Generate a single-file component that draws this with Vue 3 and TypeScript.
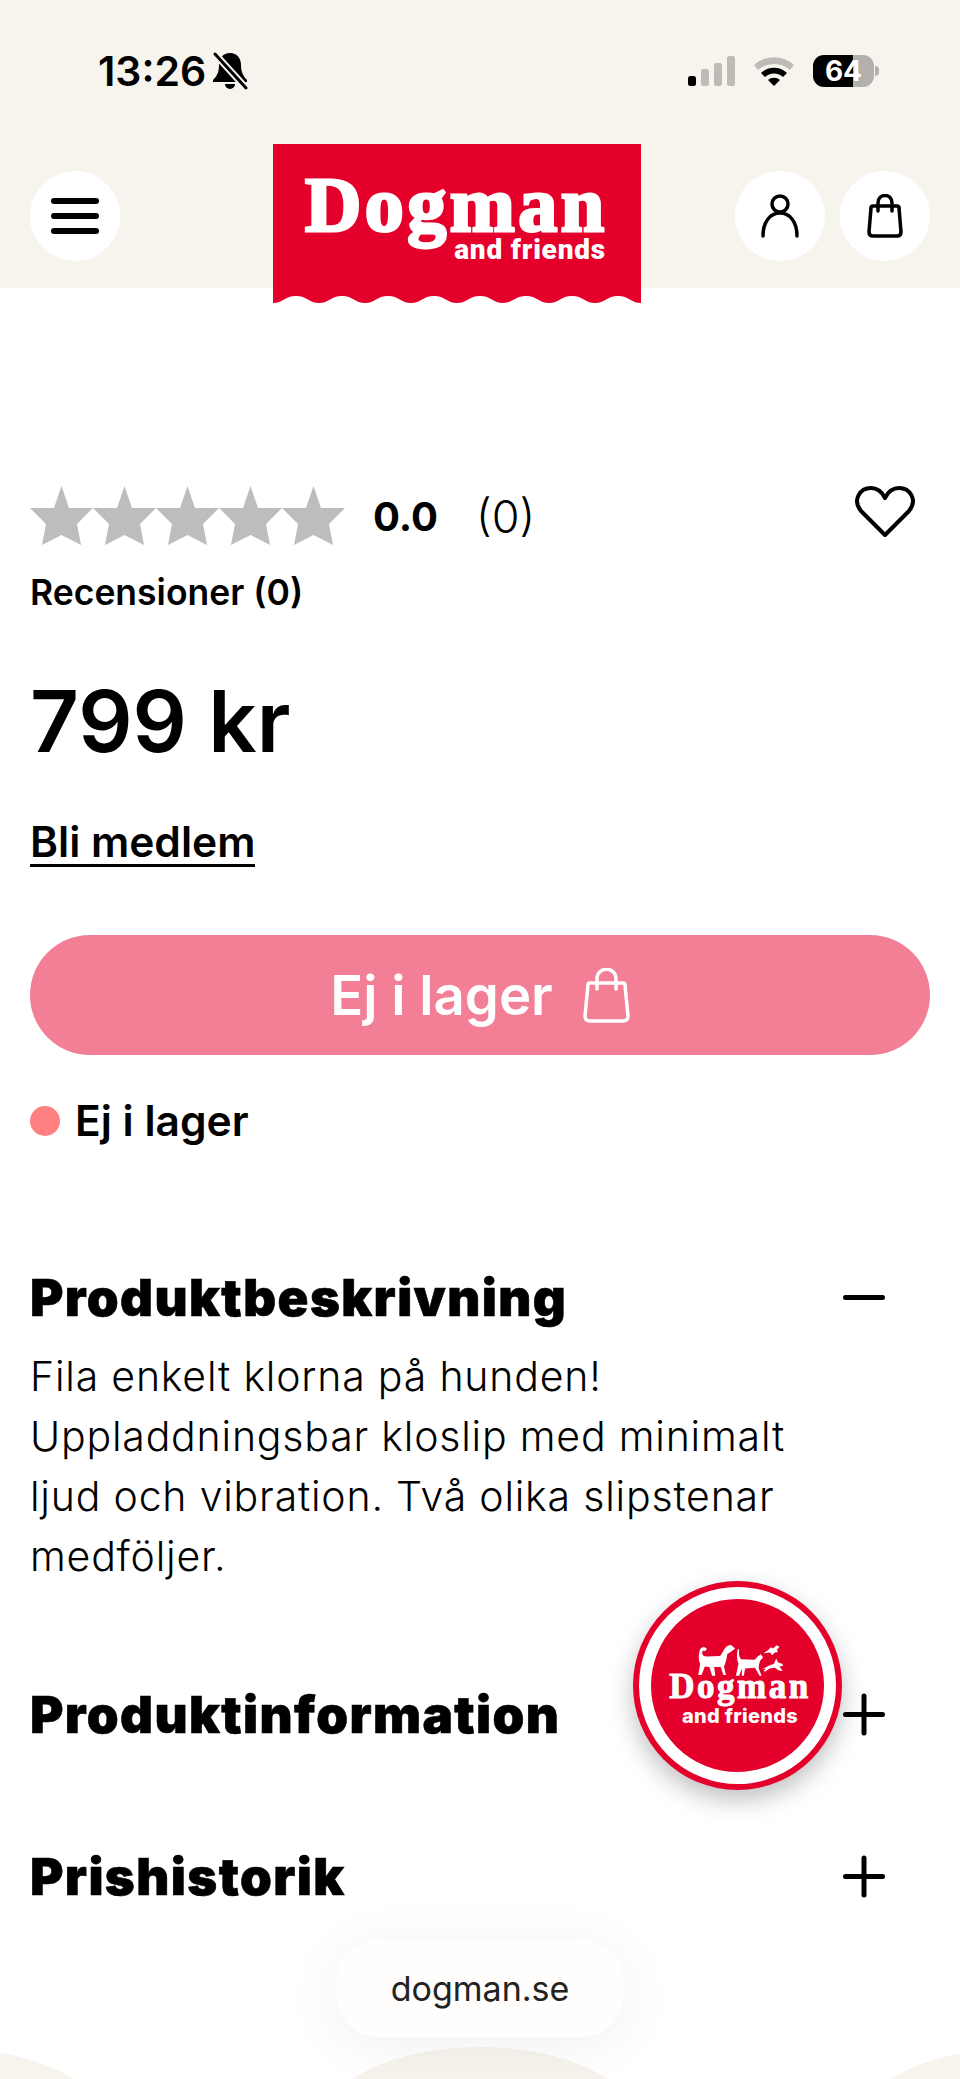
<script setup lang="ts">
const stars = [1, 2, 3, 4, 5];
const description = 'Fila enkelt klorna på hunden! Uppladdningsbar kloslip med minimalt ljud och vibration. Två olika slipstenar medföljer.';
const sections = ['Produktinformation', 'Prishistorik'];

// scalloped bottom edge of the logo, eight humps
let wavePath = 'M0 8';
for (let i = 0; i < 8; i++) {
  const x = i * 46;
  wavePath += ` C${x + 10} 8 ${x + 12} 1 ${x + 23} 1 C${x + 34} 1 ${x + 36} 8 ${x + 46} 8`;
}
wavePath += ' Z';
</script>

<template>
  <div class="page">
    <header class="top">
      <div class="status">
        <div class="time">
          <span>13:26</span>
          <svg width="36" height="38" viewBox="0 0 36 38">
            <path d="M18 1c-7 0-11 5-11 12 0 7-2 11-6 15v2h34v-2c-4-4-6-8-6-15 0-7-4-12-11-12z" fill="#000" />
            <path d="M13 32h10a5 5 0 0 1-10 0z" fill="#000" />
            <path d="M3 2l31 34" stroke="#f7f4ee" stroke-width="7" />
            <path d="M3 2l31 34" stroke="#000" stroke-width="3" stroke-linecap="round" />
          </svg>
        </div>
        <div class="indicators">
          <svg width="47" height="30" viewBox="0 0 47 30">
            <rect x="0" y="20" width="8" height="10" rx="2.5" fill="#000" />
            <rect x="13" y="13" width="8" height="17" rx="2.5" fill="#bdbbb6" />
            <rect x="26" y="7" width="8" height="23" rx="2.5" fill="#bdbbb6" />
            <rect x="39" y="0" width="8" height="30" rx="2.5" fill="#bdbbb6" />
          </svg>
          <svg width="40" height="30" viewBox="0 0 40 30">
            <path d="M0 9a30 30 0 0 1 40 0l-4 5a24 24 0 0 0-32 0z" fill="#bdbbb6" />
            <path d="M7 17a19 19 0 0 1 26 0l-4 4a13 13 0 0 0-18 0z" fill="#000" />
            <path d="M14 24a9 9 0 0 1 12 0l-6 6z" fill="#000" />
          </svg>
          <div class="battery">
            <span class="level">64</span>
          </div>
        </div>
      </div>
      <nav class="bar">
        <button class="round">
          <span class="burger"><i /><i /><i /></span>
        </button>
        <div class="logo">
          <div class="brand">Dogman</div>
          <div class="friends">and friends</div>
          <svg class="wave" width="368" height="8" viewBox="0 0 368 8">
            <path :d="wavePath" fill="#fff" />
          </svg>
        </div>
        <div class="actions">
          <button class="round">
            <svg width="38" height="44" viewBox="0 0 38 44" fill="none" stroke="#000" stroke-width="3.500" stroke-linecap="round">
              <circle cx="19" cy="10" r="8" />
              <path d="M2 42C2 28 9 19 19 19C29 19 36 28 36 42" />
            </svg>
          </button>
          <button class="round">
            <svg width="36" height="44" viewBox="0 0 36 44" fill="none" stroke="#000" stroke-width="3.500" stroke-linecap="round" stroke-linejoin="round">
              <path d="M6 12H30Q32 12 32 14L34 38Q34 42 30 42H6Q2 42 2 38L4 14Q4 12 6 12Z" />
              <path d="M11 17V9C11-1 25-1 25 9V17" />
            </svg>
          </button>
        </div>
      </nav>
    </header>

    <main class="content">
      <div class="rating">
        <div class="stars">
          <svg v-for="s in stars" :key="s" width="63" height="60" viewBox="0 0 63 60">
            <path d="M31.500 0L39 22H63L47 38L51 59L31.500 49L12 59L16 38L0 22H24Z" fill="#bdbdbd" />
          </svg>
        </div>
        <span class="score">0.0</span>
        <span class="count">(0)</span>
        <svg class="heart" width="60" height="52" viewBox="0 0 60 52" fill="none" stroke="#000" stroke-width="4" stroke-linejoin="round">
          <path d="M30 49L6 25C-3 14 5 2 16 2c6 0 11 4 14 10C33 6 38 2 44 2c11 0 19 12 10 23z" />
        </svg>
      </div>
      <div class="reviews">Recensioner (0)</div>
      <div class="price">799 kr</div>
      <a class="member">Bli medlem</a>
      <button class="buy">
        <span>Ej i lager</span>
        <svg width="47" height="55" viewBox="0 0 47 55" fill="none" stroke="#fff" stroke-width="3.500" stroke-linecap="round" stroke-linejoin="round">
          <path d="M7 15H40Q42 15 42 17L45 48Q45 53 40 53H7Q2 53 2 48L5 17Q5 15 7 15Z" />
          <path d="M14 21V11C14-2 33-2 33 11V21" />
        </svg>
      </button>
      <div class="stock"><i class="dot" />Ej i lager</div>

      <section class="open">
        <div class="head">
          <h2>Produktbeskrivning</h2>
          <span class="minus" />
        </div>
        <p>{{ description }}</p>
      </section>

      <section v-for="name in sections" :key="name" class="closed">
        <div class="head">
          <h2>{{ name }}</h2>
          <span class="plus" />
        </div>
      </section>
    </main>

    <div class="badge">
      <div class="badge-inner">
        <svg width="88" height="33" viewBox="0 0 265 100" fill="#fff">
          <path d="M6 94L12 60C6 50 6 30 12 16C16 8 28 8 32 16L26 22C22 18 18 20 18 28C18 34 24 38 32 38L72 36C80 28 84 12 94 6L104 2L118 14L104 24L94 30C92 46 88 60 84 68L90 94L82 94L74 70L54 70L58 96L48 96L40 70L26 68L16 94Z" />
          <path d="M120 96L128 60C122 46 122 30 126 16L130 16C128 30 130 40 136 46L176 48C182 44 186 36 192 34L194 30L200 36L202 42L194 50C190 60 188 70 190 76L198 96L192 96L178 72L148 74L144 96L138 96L138 74L130 96Z" />
          <path d="M204 28L218 18L226 10L232 14L244 4L252 8L244 18L248 24L238 26L230 34L224 26Z" />
          <path d="M200 76L220 66L236 60L242 44L248 56L260 60L264 66L252 68L262 82L250 80L238 72L222 74L208 84L204 80L212 74Z" />
        </svg>
        <div class="badge-brand">Dogman</div>
        <div class="badge-friends">and friends</div>
      </div>
    </div>

    <div class="glow left" />
    <div class="glow middle" />
    <div class="glow right" />
    <div class="url">dogman.se</div>
  </div>
</template>

<style scoped>
.page {
  position: relative;
  width: 960px;
  height: 2079px;
  overflow: hidden;
  background: #fff;
  color: #000;
  font-family: Inter, sans-serif;
}

.top {
  height: 288px;
  background: #f7f4ee;
  box-sizing: border-box;
  padding-top: 46px;
}

.status {
  display: flex;
  justify-content: space-between;
  align-items: center;
  padding: 0 86px 0 98px;
  height: 50px;
}

.time {
  display: flex;
  align-items: center;
  gap: 6px;
  font-size: 41px;
  font-weight: 600;
}

.indicators {
  display: flex;
  align-items: center;
  gap: 19px;
}

.battery {
  position: relative;
  width: 61px;
  height: 32px;
  border-radius: 11px;
  background: linear-gradient(90deg, #000 0 65%, #b3b1ad 65% 100%);
  display: flex;
  align-items: center;
  justify-content: center;
}

.battery::after {
  content: '';
  position: absolute;
  right: -5px;
  top: 11px;
  width: 4px;
  height: 10px;
  border-radius: 0 4px 4px 0;
  background: #b3b1ad;
}

.level {
  color: #fff;
  font-size: 28px;
  font-weight: 700;
}

.bar {
  display: flex;
  align-items: flex-start;
  padding: 48px 30px 0;
  height: 159px;
}

.round {
  width: 90px;
  height: 90px;
  margin-top: 27px;
  padding: 0;
  border: 0;
  border-radius: 50%;
  background: #fff;
  display: flex;
  align-items: center;
  justify-content: center;
}

.burger {
  display: flex;
  flex-direction: column;
  gap: 9px;
}

.burger i {
  display: block;
  width: 48px;
  height: 6px;
  border-radius: 3px;
  background: #000;
}

.logo {
  position: relative;
  z-index: 1;
  box-sizing: border-box;
  width: 368px;
  height: 159px;
  margin-left: 153px;
  padding: 30px 35px 0 32px;
  background: #e4002b;
  color: #fff;
}

.brand {
  font-family: 'Liberation Serif', serif;
  font-size: 78px;
  font-weight: 700;
  line-height: 62px;
  letter-spacing: 3.500px;
  -webkit-text-stroke: 3px #fff;
}

.friends {
  text-align: right;
  font-family: Roboto, sans-serif;
  font-size: 28px;
  font-weight: 900;
  line-height: 28px;
  letter-spacing: 0.8px;
}

.wave {
  position: absolute;
  left: 0;
  bottom: 0;
}

.actions {
  display: flex;
  gap: 15px;
  margin-left: auto;
}

.content {
  padding: 198px 30px 0;
}

.rating {
  display: flex;
  align-items: center;
  height: 60px;
}

.stars {
  display: flex;
  margin-right: 28px;
}

.score {
  font-size: 40px;
  font-weight: 700;
  margin-right: 38px;
}

.count {
  font-size: 45px;
  font-weight: 300;
}

.heart {
  margin-left: auto;
  margin-right: 15px;
  align-self: flex-start;
}

.reviews {
  margin-top: 21px;
  font-size: 35.500px;
  font-weight: 600;
  line-height: 52px;
}

.price {
  margin-top: 48px;
  font-size: 85px;
  font-weight: 600;
  line-height: 110px;
}

.member {
  display: inline-block;
  margin-top: 43px;
  font-size: 42.500px;
  font-weight: 600;
  line-height: 44px;
  border-bottom: 3px solid #000;
}

.buy {
  width: 900px;
  height: 120px;
  margin-top: 68px;
  padding: 0;
  border: 0;
  border-radius: 60px;
  background: #f27f96;
  color: #fff;
  font-family: Inter, sans-serif;
  font-size: 54.500px;
  font-weight: 600;
  display: flex;
  align-items: center;
  justify-content: center;
  gap: 30px;
}

.stock {
  display: flex;
  align-items: center;
  gap: 15px;
  margin-top: 39px;
  font-size: 42.500px;
  font-weight: 600;
  line-height: 54px;
}

.dot {
  width: 30px;
  height: 30px;
  border-radius: 50%;
  background: #ff8080;
}

.open {
  margin-top: 119px;
}

.head {
  display: flex;
  align-items: center;
  justify-content: space-between;
  padding-right: 45px;
  height: 60px;
}

h2 {
  margin: 0;
  font-size: 51px;
  font-weight: 900;
  letter-spacing: 1.400px;
  -webkit-text-stroke: 0.6px #000;
}

.open p {
  margin: 19px 0 0;
  width: 790px;
  font-size: 41px;
  font-weight: 300;
  letter-spacing: 0.8px;
  line-height: 60px;
}

.closed {
  margin-top: 98px;
}

.closed + .closed {
  margin-top: 102px;
}

.minus,
.plus {
  position: relative;
  width: 42px;
  height: 42px;
}

.minus::before,
.plus::before,
.plus::after {
  content: '';
  position: absolute;
  left: 0;
  top: 19px;
  width: 42px;
  height: 5px;
  border-radius: 3px;
  background: #000;
}

.plus::after {
  transform: rotate(90deg);
}

.badge {
  position: absolute;
  left: 633px;
  top: 1581px;
  z-index: 2;
  box-sizing: border-box;
  width: 209px;
  height: 209px;
  padding: 6px;
  border-radius: 50%;
  background: #e4002b;
  box-shadow: 0 10px 24px rgba(0, 0, 0, 0.25);
}

.badge-inner {
  box-sizing: border-box;
  height: 100%;
  padding: 45px 0 0 5px;
  border: 12px solid #fff;
  border-radius: 50%;
  background: #e4002b;
  color: #fff;
  text-align: center;
}

.badge-inner svg {
  display: block;
  margin: 0 auto;
}

.badge-brand {
  margin-top: -6px;
  font-family: 'Liberation Serif', serif;
  font-size: 35px;
  font-weight: 700;
  line-height: 32px;
  letter-spacing: 2.500px;
  -webkit-text-stroke: 1px #fff;
}

.badge-friends {
  margin-top: 1px;
  font-size: 20px;
  font-weight: 800;
  line-height: 24px;
  letter-spacing: 0.3px;
}

.glow {
  position: absolute;
  border-radius: 50%;
  background: #f7f4ee;
}

.left {
  left: -192px;
  top: 2050px;
  width: 300px;
  height: 160px;
}

.middle {
  left: 320px;
  top: 2047px;
  width: 320px;
  height: 160px;
}

.right {
  left: 856px;
  top: 2050px;
  width: 300px;
  height: 160px;
}

.url {
  position: absolute;
  left: 336px;
  top: 1940px;
  z-index: 1;
  width: 288px;
  height: 97px;
  border-radius: 42px;
  background: #fffefd;
  box-shadow: 0 8px 60px rgba(0, 0, 0, 0.06);
  display: flex;
  align-items: center;
  justify-content: center;
  font-size: 34px;
  color: #222;
}
</style>
